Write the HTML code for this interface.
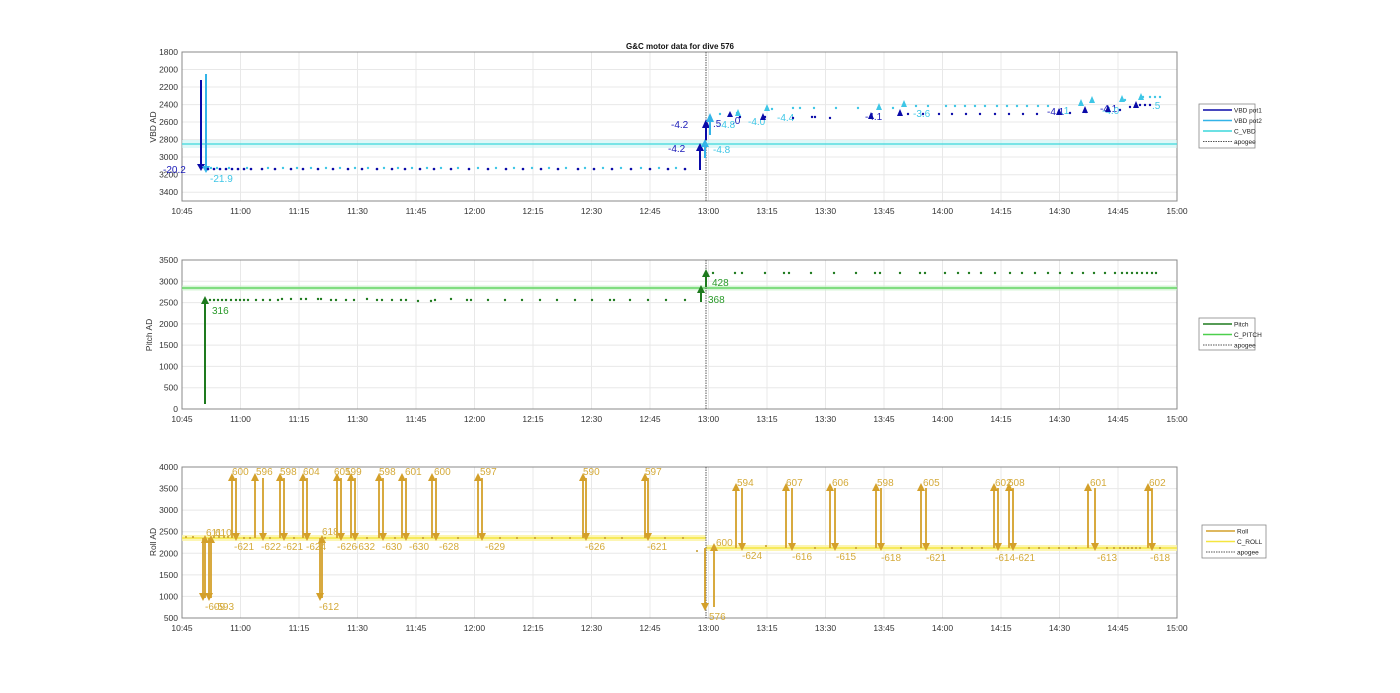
<!DOCTYPE html>
<html><head><meta charset="utf-8"><style>
html,body{margin:0;padding:0;background:#fff;}
svg{display:block;font-family:"Liberation Sans",sans-serif;}
.tk{font-size:8.5px;fill:#333;}
.g{stroke:#e8e8e8;stroke-width:1;}
.ax{fill:none;stroke:#888;stroke-width:1;}
</style></head><body>
<svg width="1400" height="693" viewBox="0 0 1400 693" xmlns="http://www.w3.org/2000/svg">
<rect width="1400" height="693" fill="#fff"/>
<!-- ============ PANEL 1 ============ -->
<g class="g">
<line x1="240.5" y1="52" x2="240.5" y2="201"/><line x1="299" y1="52" x2="299" y2="201"/><line x1="357.5" y1="52" x2="357.5" y2="201"/><line x1="416" y1="52" x2="416" y2="201"/><line x1="474.5" y1="52" x2="474.5" y2="201"/><line x1="533" y1="52" x2="533" y2="201"/><line x1="591.5" y1="52" x2="591.5" y2="201"/><line x1="650" y1="52" x2="650" y2="201"/><line x1="708.5" y1="52" x2="708.5" y2="201"/><line x1="767" y1="52" x2="767" y2="201"/><line x1="825.5" y1="52" x2="825.5" y2="201"/><line x1="884" y1="52" x2="884" y2="201"/><line x1="942.5" y1="52" x2="942.5" y2="201"/><line x1="1001" y1="52" x2="1001" y2="201"/><line x1="1059.5" y1="52" x2="1059.5" y2="201"/><line x1="1118" y1="52" x2="1118" y2="201"/>
<line x1="182" y1="69.5" x2="1177" y2="69.5"/><line x1="182" y1="87" x2="1177" y2="87"/><line x1="182" y1="104.6" x2="1177" y2="104.6"/><line x1="182" y1="122" x2="1177" y2="122"/><line x1="182" y1="139.6" x2="1177" y2="139.6"/><line x1="182" y1="157" x2="1177" y2="157"/><line x1="182" y1="174.7" x2="1177" y2="174.7"/><line x1="182" y1="192.2" x2="1177" y2="192.2"/>
</g>
<rect class="ax" x="182" y="52" width="995" height="149"/>
<text x="680" y="49" font-size="8px" font-weight="bold" text-anchor="middle" fill="#111">G&amp;C motor data for dive 576</text>
<g class="tk" text-anchor="end">
<text x="178" y="55">1800</text><text x="178" y="72.5">2000</text><text x="178" y="90">2200</text><text x="178" y="107.6">2400</text><text x="178" y="125">2600</text><text x="178" y="142.6">2800</text><text x="178" y="160">3000</text><text x="178" y="177.7">3200</text><text x="178" y="195.2">3400</text>
</g>
<g class="tk" text-anchor="middle">
<text x="182" y="214">10:45</text><text x="240.5" y="214">11:00</text><text x="299" y="214">11:15</text><text x="357.5" y="214">11:30</text><text x="416" y="214">11:45</text><text x="474.5" y="214">12:00</text><text x="533" y="214">12:15</text><text x="591.5" y="214">12:30</text><text x="650" y="214">12:45</text><text x="708.5" y="214">13:00</text><text x="767" y="214">13:15</text><text x="825.5" y="214">13:30</text><text x="884" y="214">13:45</text><text x="942.5" y="214">14:00</text><text x="1001" y="214">14:15</text><text x="1059.5" y="214">14:30</text><text x="1118" y="214">14:45</text><text x="1177" y="214">15:00</text>
</g>
<text transform="translate(156,127) rotate(-90)" font-size="8.5px" fill="#333" text-anchor="middle">VBD AD</text>
<rect x="182" y="140" width="995" height="8" fill="#c8f4f4" opacity="0.6"/>
<line x1="182" y1="144" x2="1177" y2="144" stroke="#3cd7dc" stroke-width="1.3"/>
<line x1="706" y1="52" x2="706" y2="201" stroke="#555" stroke-dasharray="1.5,1" stroke-width="1"/>
<!-- arrows -->
<g stroke-width="2">
<line x1="201" y1="80" x2="201" y2="164" stroke="#0a0aa8"/><polygon points="197,164 205,164 201,171" fill="#0a0aa8"/>
<line x1="206" y1="74" x2="206" y2="166" stroke="#33b4e8"/><polygon points="202,166 210,166 206,173" fill="#33b4e8"/>
<line x1="700" y1="170" x2="700" y2="150" stroke="#0a0aa8"/><polygon points="696,151 704,151 700,143" fill="#0a0aa8"/>
<line x1="705" y1="158" x2="705" y2="146" stroke="#33b4e8"/><polygon points="701,147 709,147 705,139" fill="#33b4e8"/>
<line x1="706" y1="140" x2="706" y2="127" stroke="#0a0aa8"/><polygon points="702,128 710,128 706,119" fill="#0a0aa8"/>
<line x1="710" y1="135" x2="710" y2="121" stroke="#33b4e8"/><polygon points="706,122 714,122 710,113" fill="#33b4e8"/>
</g>
<g font-size="10px" fill="#1a1ab8">
<text x="163" y="173">-20.2</text><text x="668" y="152">-4.2</text><text x="671" y="128">-4.2</text><text x="713" y="127">.5</text><text x="732" y="124">.0</text><text x="865" y="120">-4.1</text><text x="1047" y="115">-4.1</text><text x="1100" y="112">-4.1</text>
</g>
<g font-size="10px" fill="#3ec6e6">
<text x="210" y="182">-21.9</text><text x="713" y="153">-4.8</text><text x="718" y="128">-4.8</text><text x="748" y="125">-4.0</text><text x="777" y="121">-4.4</text><text x="913" y="117">-3.6</text><text x="1061" y="114">.1</text><text x="1102" y="114">-4.0</text><text x="1152" y="109">.5</text>
</g>
<g fill="#0a0aa8">
<circle cx="208" cy="169" r="1.3"/><circle cx="214" cy="169" r="1.3"/><circle cx="220" cy="169" r="1.3"/><circle cx="226" cy="169" r="1.3"/><circle cx="232" cy="169" r="1.3"/><circle cx="238" cy="169" r="1.3"/><circle cx="244" cy="169" r="1.3"/><circle cx="251" cy="169" r="1.3"/><circle cx="262" cy="169" r="1.3"/><circle cx="275" cy="169" r="1.3"/><circle cx="291" cy="169" r="1.3"/><circle cx="303" cy="169" r="1.3"/><circle cx="318" cy="169" r="1.3"/><circle cx="333" cy="169" r="1.3"/><circle cx="348" cy="169" r="1.3"/><circle cx="362" cy="169" r="1.3"/><circle cx="377" cy="169" r="1.3"/><circle cx="392" cy="169" r="1.3"/><circle cx="405" cy="169" r="1.3"/><circle cx="420" cy="169" r="1.3"/><circle cx="434" cy="169" r="1.3"/><circle cx="451" cy="169" r="1.3"/><circle cx="469" cy="169" r="1.3"/><circle cx="488" cy="169" r="1.3"/><circle cx="506" cy="169" r="1.3"/><circle cx="523" cy="169" r="1.3"/><circle cx="541" cy="169" r="1.3"/><circle cx="558" cy="169" r="1.3"/><circle cx="578" cy="169" r="1.3"/><circle cx="594" cy="169" r="1.3"/><circle cx="612" cy="169" r="1.3"/><circle cx="631" cy="169" r="1.3"/><circle cx="650" cy="169" r="1.3"/><circle cx="668" cy="169" r="1.3"/><circle cx="685" cy="169" r="1.3"/>
<circle cx="740" cy="117" r="1.2"/><circle cx="765" cy="117" r="1.2"/><circle cx="793" cy="118" r="1.2"/><circle cx="812" cy="117" r="1.2"/><circle cx="815" cy="117" r="1.2"/><circle cx="830" cy="118" r="1.2"/><circle cx="908" cy="114" r="1.2"/><circle cx="923" cy="114" r="1.2"/><circle cx="939" cy="114" r="1.2"/><circle cx="952" cy="114" r="1.2"/><circle cx="966" cy="114" r="1.2"/><circle cx="980" cy="114" r="1.2"/><circle cx="995" cy="114" r="1.2"/><circle cx="1009" cy="114" r="1.2"/><circle cx="1023" cy="114" r="1.2"/><circle cx="1037" cy="114" r="1.2"/><circle cx="1070" cy="113" r="1.2"/><circle cx="1086" cy="112" r="1.2"/><circle cx="1120" cy="110" r="1.2"/><circle cx="1130" cy="107" r="1.2"/><circle cx="1140" cy="105" r="1.2"/><circle cx="1145" cy="105" r="1.2"/><circle cx="1150" cy="105" r="1.2"/>
<polygon points="727,117 733,117 730,111"/><polygon points="760,120 766,120 763,113"/><polygon points="868,119 874,119 871,112"/><polygon points="897,116 903,116 900,109"/><polygon points="1056,115 1062,115 1059,108"/><polygon points="1082,113 1088,113 1085,106"/><polygon points="1105,112 1111,112 1108,105"/><polygon points="1133,108 1139,108 1136,101"/>
</g>
<g fill="#3ec6e6">
<circle cx="211" cy="168" r="1.2"/><circle cx="217" cy="168" r="1.2"/><circle cx="229" cy="168" r="1.2"/><circle cx="247" cy="168" r="1.2"/><circle cx="268" cy="168" r="1.2"/><circle cx="283" cy="168" r="1.2"/><circle cx="297" cy="168" r="1.2"/><circle cx="311" cy="168" r="1.2"/><circle cx="326" cy="168" r="1.2"/><circle cx="340" cy="168" r="1.2"/><circle cx="355" cy="168" r="1.2"/><circle cx="368" cy="168" r="1.2"/><circle cx="384" cy="168" r="1.2"/><circle cx="398" cy="168" r="1.2"/><circle cx="412" cy="168" r="1.2"/><circle cx="427" cy="168" r="1.2"/><circle cx="441" cy="168" r="1.2"/><circle cx="458" cy="168" r="1.2"/><circle cx="478" cy="168" r="1.2"/><circle cx="496" cy="168" r="1.2"/><circle cx="514" cy="168" r="1.2"/><circle cx="532" cy="168" r="1.2"/><circle cx="549" cy="168" r="1.2"/><circle cx="566" cy="168" r="1.2"/><circle cx="585" cy="168" r="1.2"/><circle cx="603" cy="168" r="1.2"/><circle cx="621" cy="168" r="1.2"/><circle cx="641" cy="168" r="1.2"/><circle cx="659" cy="168" r="1.2"/><circle cx="676" cy="168" r="1.2"/>
<circle cx="720" cy="114" r="1.2"/><circle cx="737" cy="113" r="1.2"/><circle cx="772" cy="109" r="1.2"/><circle cx="793" cy="108" r="1.2"/><circle cx="800" cy="108" r="1.2"/><circle cx="814" cy="108" r="1.2"/><circle cx="836" cy="108" r="1.2"/><circle cx="858" cy="108" r="1.2"/><circle cx="893" cy="108" r="1.2"/><circle cx="916" cy="106" r="1.2"/><circle cx="928" cy="106" r="1.2"/><circle cx="946" cy="106" r="1.2"/><circle cx="955" cy="106" r="1.2"/><circle cx="965" cy="106" r="1.2"/><circle cx="975" cy="106" r="1.2"/><circle cx="985" cy="106" r="1.2"/><circle cx="997" cy="106" r="1.2"/><circle cx="1007" cy="106" r="1.2"/><circle cx="1017" cy="106" r="1.2"/><circle cx="1027" cy="106" r="1.2"/><circle cx="1038" cy="106" r="1.2"/><circle cx="1048" cy="106" r="1.2"/><circle cx="1125" cy="100" r="1.2"/><circle cx="1143" cy="97" r="1.2"/><circle cx="1150" cy="97" r="1.2"/><circle cx="1155" cy="97" r="1.2"/><circle cx="1160" cy="97" r="1.2"/>
<polygon points="735,116 741,116 738,109"/><polygon points="764,111 770,111 767,104"/><polygon points="876,110 882,110 879,103"/><polygon points="901,107 907,107 904,100"/><polygon points="1078,106 1084,106 1081,99"/><polygon points="1089,103 1095,103 1092,96"/><polygon points="1119,102 1125,102 1122,95"/><polygon points="1138,100 1144,100 1141,93"/>
</g>
<!-- legend 1 -->
<rect x="1199" y="104" width="56" height="44" fill="#fff" stroke="#888" stroke-width="0.8"/>
<line x1="1203" y1="110" x2="1232" y2="110" stroke="#0a0aa8" stroke-width="1.5"/><line x1="1203" y1="120.5" x2="1232" y2="120.5" stroke="#33b4e8" stroke-width="1.5"/><line x1="1203" y1="131" x2="1232" y2="131" stroke="#3cd7dc" stroke-width="1.5"/><line x1="1203" y1="141.5" x2="1232" y2="141.5" stroke="#555" stroke-dasharray="1.5,1"/>
<g font-size="6.5px" fill="#222"><text x="1234" y="112.5">VBD pot1</text><text x="1234" y="123">VBD pot2</text><text x="1234" y="133.5">C_VBD</text><text x="1234" y="144">apogee</text></g>
<!-- ============ PANEL 2 ============ -->
<g class="g">
<line x1="240.5" y1="260" x2="240.5" y2="409"/><line x1="299" y1="260" x2="299" y2="409"/><line x1="357.5" y1="260" x2="357.5" y2="409"/><line x1="416" y1="260" x2="416" y2="409"/><line x1="474.5" y1="260" x2="474.5" y2="409"/><line x1="533" y1="260" x2="533" y2="409"/><line x1="591.5" y1="260" x2="591.5" y2="409"/><line x1="650" y1="260" x2="650" y2="409"/><line x1="708.5" y1="260" x2="708.5" y2="409"/><line x1="767" y1="260" x2="767" y2="409"/><line x1="825.5" y1="260" x2="825.5" y2="409"/><line x1="884" y1="260" x2="884" y2="409"/><line x1="942.5" y1="260" x2="942.5" y2="409"/><line x1="1001" y1="260" x2="1001" y2="409"/><line x1="1059.5" y1="260" x2="1059.5" y2="409"/><line x1="1118" y1="260" x2="1118" y2="409"/>
<line x1="182" y1="281.3" x2="1177" y2="281.3"/><line x1="182" y1="302.6" x2="1177" y2="302.6"/><line x1="182" y1="323.9" x2="1177" y2="323.9"/><line x1="182" y1="345.1" x2="1177" y2="345.1"/><line x1="182" y1="366.4" x2="1177" y2="366.4"/><line x1="182" y1="387.7" x2="1177" y2="387.7"/>
</g>
<rect class="ax" x="182" y="260" width="995" height="149"/>
<g class="tk" text-anchor="end">
<text x="178" y="263">3500</text><text x="178" y="284.3">3000</text><text x="178" y="305.6">2500</text><text x="178" y="326.9">2000</text><text x="178" y="348.1">1500</text><text x="178" y="369.4">1000</text><text x="178" y="390.7">500</text><text x="178" y="412">0</text>
</g>
<g class="tk" text-anchor="middle">
<text x="182" y="422">10:45</text><text x="240.5" y="422">11:00</text><text x="299" y="422">11:15</text><text x="357.5" y="422">11:30</text><text x="416" y="422">11:45</text><text x="474.5" y="422">12:00</text><text x="533" y="422">12:15</text><text x="591.5" y="422">12:30</text><text x="650" y="422">12:45</text><text x="708.5" y="422">13:00</text><text x="767" y="422">13:15</text><text x="825.5" y="422">13:30</text><text x="884" y="422">13:45</text><text x="942.5" y="422">14:00</text><text x="1001" y="422">14:15</text><text x="1059.5" y="422">14:30</text><text x="1118" y="422">14:45</text><text x="1177" y="422">15:00</text>
</g>
<text transform="translate(152,335) rotate(-90)" font-size="8.5px" fill="#333" text-anchor="middle">Pitch AD</text>
<rect x="182" y="285.5" width="995" height="5" fill="#c6f0c6" opacity="0.7"/>
<line x1="182" y1="288" x2="1177" y2="288" stroke="#4ccf4c" stroke-width="1.3"/>
<line x1="706" y1="260" x2="706" y2="409" stroke="#555" stroke-dasharray="1.5,1"/>
<g stroke="#1e7a1e" stroke-width="2">
<line x1="205" y1="404" x2="205" y2="303"/><line x1="701" y1="302" x2="701" y2="292"/><line x1="706" y1="287" x2="706" y2="276"/>
</g>
<g fill="#1e7a1e">
<polygon points="201,304 209,304 205,296"/><polygon points="697,293 705,293 701,285"/><polygon points="702,277 710,277 706,269"/>
</g>
<g font-size="10px" fill="#2a9a2a"><text x="212" y="314">316</text><text x="708" y="303">368</text><text x="712" y="286">428</text></g>
<g fill="#1e7a1e">
<circle cx="210" cy="300" r="1.2"/><circle cx="214" cy="300" r="1.2"/><circle cx="218" cy="300" r="1.2"/><circle cx="222" cy="300" r="1.2"/><circle cx="226" cy="300" r="1.2"/><circle cx="231" cy="300" r="1.2"/><circle cx="236" cy="300" r="1.2"/><circle cx="240" cy="300" r="1.2"/><circle cx="244" cy="300" r="1.2"/><circle cx="248" cy="300" r="1.2"/><circle cx="256" cy="300" r="1.2"/><circle cx="263" cy="300" r="1.2"/><circle cx="270" cy="300" r="1.2"/><circle cx="278" cy="300" r="1.2"/><circle cx="282" cy="299" r="1.2"/><circle cx="291" cy="299" r="1.2"/><circle cx="301" cy="299" r="1.2"/><circle cx="306" cy="299" r="1.2"/><circle cx="318" cy="299" r="1.2"/><circle cx="321" cy="299" r="1.2"/><circle cx="331" cy="300" r="1.2"/><circle cx="336" cy="300" r="1.2"/><circle cx="346" cy="300" r="1.2"/><circle cx="354" cy="300" r="1.2"/><circle cx="367" cy="299" r="1.2"/><circle cx="377" cy="300" r="1.2"/><circle cx="382" cy="300" r="1.2"/><circle cx="392" cy="300" r="1.2"/><circle cx="401" cy="300" r="1.2"/><circle cx="406" cy="300" r="1.2"/><circle cx="418" cy="301" r="1.2"/><circle cx="431" cy="301" r="1.2"/><circle cx="435" cy="300" r="1.2"/><circle cx="451" cy="299" r="1.2"/><circle cx="467" cy="300" r="1.2"/><circle cx="471" cy="300" r="1.2"/><circle cx="488" cy="300" r="1.2"/><circle cx="505" cy="300" r="1.2"/><circle cx="522" cy="300" r="1.2"/><circle cx="540" cy="300" r="1.2"/><circle cx="557" cy="300" r="1.2"/><circle cx="575" cy="300" r="1.2"/><circle cx="592" cy="300" r="1.2"/><circle cx="610" cy="300" r="1.2"/><circle cx="614" cy="300" r="1.2"/><circle cx="630" cy="300" r="1.2"/><circle cx="648" cy="300" r="1.2"/><circle cx="666" cy="300" r="1.2"/><circle cx="685" cy="300" r="1.2"/>
<circle cx="713" cy="273" r="1.2"/><circle cx="735" cy="273" r="1.2"/><circle cx="742" cy="273" r="1.2"/><circle cx="765" cy="273" r="1.2"/><circle cx="784" cy="273" r="1.2"/><circle cx="789" cy="273" r="1.2"/><circle cx="811" cy="273" r="1.2"/><circle cx="834" cy="273" r="1.2"/><circle cx="856" cy="273" r="1.2"/><circle cx="875" cy="273" r="1.2"/><circle cx="880" cy="273" r="1.2"/><circle cx="900" cy="273" r="1.2"/><circle cx="920" cy="273" r="1.2"/><circle cx="925" cy="273" r="1.2"/><circle cx="945" cy="273" r="1.2"/><circle cx="958" cy="273" r="1.2"/><circle cx="969" cy="273" r="1.2"/><circle cx="981" cy="273" r="1.2"/><circle cx="995" cy="273" r="1.2"/><circle cx="1010" cy="273" r="1.2"/><circle cx="1022" cy="273" r="1.2"/><circle cx="1035" cy="273" r="1.2"/><circle cx="1048" cy="273" r="1.2"/><circle cx="1060" cy="273" r="1.2"/><circle cx="1072" cy="273" r="1.2"/><circle cx="1083" cy="273" r="1.2"/><circle cx="1094" cy="273" r="1.2"/><circle cx="1105" cy="273" r="1.2"/><circle cx="1115" cy="273" r="1.2"/><circle cx="1122" cy="273" r="1.2"/><circle cx="1127" cy="273" r="1.2"/><circle cx="1132" cy="273" r="1.2"/><circle cx="1137" cy="273" r="1.2"/><circle cx="1142" cy="273" r="1.2"/><circle cx="1147" cy="273" r="1.2"/><circle cx="1152" cy="273" r="1.2"/><circle cx="1156" cy="273" r="1.2"/>
</g>
<rect x="1199" y="318" width="56" height="32" fill="#fff" stroke="#888" stroke-width="0.8"/>
<line x1="1203" y1="324" x2="1232" y2="324" stroke="#1e7a1e" stroke-width="1.5"/><line x1="1203" y1="334.5" x2="1232" y2="334.5" stroke="#4ccf4c" stroke-width="1.5"/><line x1="1203" y1="345" x2="1232" y2="345" stroke="#555" stroke-dasharray="1.5,1"/>
<g font-size="6.5px" fill="#222"><text x="1234" y="326.5">Pitch</text><text x="1234" y="337">C_PITCH</text><text x="1234" y="347.5">apogee</text></g>
<!-- ============ PANEL 3 ============ -->
<g class="g">
<line x1="240.5" y1="467" x2="240.5" y2="618"/><line x1="299" y1="467" x2="299" y2="618"/><line x1="357.5" y1="467" x2="357.5" y2="618"/><line x1="416" y1="467" x2="416" y2="618"/><line x1="474.5" y1="467" x2="474.5" y2="618"/><line x1="533" y1="467" x2="533" y2="618"/><line x1="591.5" y1="467" x2="591.5" y2="618"/><line x1="650" y1="467" x2="650" y2="618"/><line x1="708.5" y1="467" x2="708.5" y2="618"/><line x1="767" y1="467" x2="767" y2="618"/><line x1="825.5" y1="467" x2="825.5" y2="618"/><line x1="884" y1="467" x2="884" y2="618"/><line x1="942.5" y1="467" x2="942.5" y2="618"/><line x1="1001" y1="467" x2="1001" y2="618"/><line x1="1059.5" y1="467" x2="1059.5" y2="618"/><line x1="1118" y1="467" x2="1118" y2="618"/>
<line x1="182" y1="488.6" x2="1177" y2="488.6"/><line x1="182" y1="510.1" x2="1177" y2="510.1"/><line x1="182" y1="531.7" x2="1177" y2="531.7"/><line x1="182" y1="553.3" x2="1177" y2="553.3"/><line x1="182" y1="574.9" x2="1177" y2="574.9"/><line x1="182" y1="596.4" x2="1177" y2="596.4"/>
</g>
<rect class="ax" x="182" y="467" width="995" height="151"/>
<g class="tk" text-anchor="end">
<text x="178" y="470">4000</text><text x="178" y="491.6">3500</text><text x="178" y="513.1">3000</text><text x="178" y="534.7">2500</text><text x="178" y="556.3">2000</text><text x="178" y="577.9">1500</text><text x="178" y="599.4">1000</text><text x="178" y="621">500</text>
</g>
<g class="tk" text-anchor="middle">
<text x="182" y="631">10:45</text><text x="240.5" y="631">11:00</text><text x="299" y="631">11:15</text><text x="357.5" y="631">11:30</text><text x="416" y="631">11:45</text><text x="474.5" y="631">12:00</text><text x="533" y="631">12:15</text><text x="591.5" y="631">12:30</text><text x="650" y="631">12:45</text><text x="708.5" y="631">13:00</text><text x="767" y="631">13:15</text><text x="825.5" y="631">13:30</text><text x="884" y="631">13:45</text><text x="942.5" y="631">14:00</text><text x="1001" y="631">14:15</text><text x="1059.5" y="631">14:30</text><text x="1118" y="631">14:45</text><text x="1177" y="631">15:00</text>
</g>
<text transform="translate(156,542) rotate(-90)" font-size="8.5px" fill="#333" text-anchor="middle">Roll AD</text>
<rect x="182" y="535" width="524" height="6" fill="#fbf3a0" opacity="0.8"/>
<line x1="182" y1="538" x2="706" y2="538" stroke="#f5e640" stroke-width="1.5"/>
<rect x="706" y="545" width="471" height="6" fill="#fbf3a0" opacity="0.8"/>
<line x1="706" y1="548" x2="1177" y2="548" stroke="#f5e640" stroke-width="1.5"/>
<line x1="706" y1="467" x2="706" y2="618" stroke="#555" stroke-dasharray="1.5,1"/>
<g fill="#c49a2a">
<circle cx="186" cy="537" r="1"/><circle cx="193" cy="537" r="1"/><circle cx="214" cy="537" r="1"/><circle cx="219" cy="537" r="1"/><circle cx="224" cy="537" r="1"/><circle cx="228" cy="537" r="1"/><circle cx="244" cy="538" r="1"/><circle cx="250" cy="538" r="1"/><circle cx="270" cy="538" r="1"/><circle cx="294" cy="538" r="1"/><circle cx="325" cy="538" r="1"/><circle cx="367" cy="538" r="1"/><circle cx="395" cy="538" r="1"/><circle cx="423" cy="538" r="1"/><circle cx="458" cy="538" r="1"/><circle cx="500" cy="538" r="1"/><circle cx="517" cy="538" r="1"/><circle cx="535" cy="538" r="1"/><circle cx="552" cy="538" r="1"/><circle cx="570" cy="538" r="1"/><circle cx="605" cy="538" r="1"/><circle cx="622" cy="538" r="1"/><circle cx="665" cy="538" r="1"/><circle cx="683" cy="538" r="1"/><circle cx="697" cy="551" r="1"/>
<circle cx="766" cy="546" r="1"/><circle cx="815" cy="548" r="1"/><circle cx="856" cy="548" r="1"/><circle cx="901" cy="548" r="1"/><circle cx="942" cy="548" r="1"/><circle cx="952" cy="548" r="1"/><circle cx="962" cy="548" r="1"/><circle cx="972" cy="548" r="1"/><circle cx="982" cy="548" r="1"/><circle cx="1029" cy="548" r="1"/><circle cx="1039" cy="548" r="1"/><circle cx="1049" cy="548" r="1"/><circle cx="1059" cy="548" r="1"/><circle cx="1069" cy="548" r="1"/><circle cx="1076" cy="548" r="1"/><circle cx="1107" cy="548" r="1"/><circle cx="1114" cy="548" r="1"/><circle cx="1120" cy="548" r="1"/><circle cx="1124" cy="548" r="1"/><circle cx="1128" cy="548" r="1"/><circle cx="1132" cy="548" r="1"/><circle cx="1136" cy="548" r="1"/><circle cx="1140" cy="548" r="1"/><circle cx="1160" cy="548" r="1"/>
</g>
<!-- up arrows: line from base to top+7, head -->
<g stroke="#d4a02a" stroke-width="1.8">
<line x1="232" y1="538" x2="232" y2="480"/><line x1="255" y1="538" x2="255" y2="480"/><line x1="280" y1="538" x2="280" y2="480"/><line x1="303" y1="538" x2="303" y2="480"/><line x1="337" y1="538" x2="337" y2="480"/><line x1="351" y1="538" x2="351" y2="480"/><line x1="379" y1="538" x2="379" y2="480"/><line x1="402" y1="538" x2="402" y2="480"/><line x1="432" y1="538" x2="432" y2="480"/><line x1="478" y1="538" x2="478" y2="480"/><line x1="583" y1="538" x2="583" y2="480"/><line x1="645" y1="538" x2="645" y2="480"/>
<line x1="205" y1="598" x2="205" y2="542"/><line x1="211" y1="598" x2="211" y2="542"/><line x1="322" y1="598" x2="322" y2="542"/><line x1="714" y1="607" x2="714" y2="550"/>
<line x1="736" y1="548" x2="736" y2="490"/><line x1="786" y1="548" x2="786" y2="490"/><line x1="830" y1="548" x2="830" y2="490"/><line x1="876" y1="548" x2="876" y2="490"/><line x1="921" y1="548" x2="921" y2="490"/><line x1="994" y1="548" x2="994" y2="490"/><line x1="1009" y1="548" x2="1009" y2="490"/><line x1="1088" y1="548" x2="1088" y2="490"/><line x1="1148" y1="548" x2="1148" y2="490"/>
<!-- down arrows -->
<line x1="236" y1="478" x2="236" y2="534"/><line x1="263" y1="478" x2="263" y2="534"/><line x1="284" y1="478" x2="284" y2="534"/><line x1="307" y1="478" x2="307" y2="534"/><line x1="341" y1="478" x2="341" y2="534"/><line x1="355" y1="478" x2="355" y2="534"/><line x1="383" y1="478" x2="383" y2="534"/><line x1="406" y1="478" x2="406" y2="534"/><line x1="436" y1="478" x2="436" y2="534"/><line x1="482" y1="478" x2="482" y2="534"/><line x1="586" y1="478" x2="586" y2="534"/><line x1="648" y1="478" x2="648" y2="534"/>
<line x1="203" y1="538" x2="203" y2="594"/><line x1="209" y1="538" x2="209" y2="594"/><line x1="320" y1="538" x2="320" y2="594"/><line x1="705" y1="548" x2="705" y2="604"/>
<line x1="742" y1="488" x2="742" y2="544"/><line x1="792" y1="488" x2="792" y2="544"/><line x1="835" y1="488" x2="835" y2="544"/><line x1="881" y1="488" x2="881" y2="544"/><line x1="926" y1="488" x2="926" y2="544"/><line x1="998" y1="488" x2="998" y2="544"/><line x1="1013" y1="488" x2="1013" y2="544"/><line x1="1095" y1="488" x2="1095" y2="544"/><line x1="1152" y1="488" x2="1152" y2="544"/>
</g>
<g fill="#d4a02a">
<polygon points="228,481 236,481 232,473"/><polygon points="251,481 259,481 255,473"/><polygon points="276,481 284,481 280,473"/><polygon points="299,481 307,481 303,473"/><polygon points="333,481 341,481 337,473"/><polygon points="347,481 355,481 351,473"/><polygon points="375,481 383,481 379,473"/><polygon points="398,481 406,481 402,473"/><polygon points="428,481 436,481 432,473"/><polygon points="474,481 482,481 478,473"/><polygon points="579,481 587,481 583,473"/><polygon points="641,481 649,481 645,473"/>
<polygon points="201,543 209,543 205,535"/><polygon points="207,543 215,543 211,535"/><polygon points="318,543 326,543 322,535"/><polygon points="710,551 718,551 714,543"/>
<polygon points="732,491 740,491 736,483"/><polygon points="782,491 790,491 786,483"/><polygon points="826,491 834,491 830,483"/><polygon points="872,491 880,491 876,483"/><polygon points="917,491 925,491 921,483"/><polygon points="990,491 998,491 994,483"/><polygon points="1005,491 1013,491 1009,483"/><polygon points="1084,491 1092,491 1088,483"/><polygon points="1144,491 1152,491 1148,483"/>
<polygon points="232,533 240,533 236,541"/><polygon points="259,533 267,533 263,541"/><polygon points="280,533 288,533 284,541"/><polygon points="303,533 311,533 307,541"/><polygon points="337,533 345,533 341,541"/><polygon points="351,533 359,533 355,541"/><polygon points="379,533 387,533 383,541"/><polygon points="402,533 410,533 406,541"/><polygon points="432,533 440,533 436,541"/><polygon points="478,533 486,533 482,541"/><polygon points="582,533 590,533 586,541"/><polygon points="644,533 652,533 648,541"/>
<polygon points="199,593 207,593 203,601"/><polygon points="205,593 213,593 209,601"/><polygon points="316,593 324,593 320,601"/><polygon points="701,603 709,603 705,611"/>
<polygon points="738,543 746,543 742,551"/><polygon points="788,543 796,543 792,551"/><polygon points="831,543 839,543 835,551"/><polygon points="877,543 885,543 881,551"/><polygon points="922,543 930,543 926,551"/><polygon points="994,543 1002,543 998,551"/><polygon points="1009,543 1017,543 1013,551"/><polygon points="1091,543 1099,543 1095,551"/><polygon points="1148,543 1156,543 1152,551"/>
</g>
<g font-size="10px" fill="#d4aa3a">
<text x="232" y="475">600</text><text x="256" y="475">596</text><text x="280" y="475">598</text><text x="303" y="475">604</text><text x="334" y="475">601</text><text x="345" y="475">599</text><text x="379" y="475">598</text><text x="405" y="475">601</text><text x="434" y="475">600</text><text x="480" y="475">597</text><text x="583" y="475">590</text><text x="645" y="475">597</text>
<text x="206" y="536">611</text><text x="215" y="536">610</text><text x="322" y="535">618</text><text x="716" y="546">600</text>
<text x="737" y="486">594</text><text x="786" y="486">607</text><text x="832" y="486">606</text><text x="877" y="486">598</text><text x="923" y="486">605</text><text x="995" y="486">602</text><text x="1008" y="486">608</text><text x="1090" y="486">601</text><text x="1149" y="486">602</text>
<text x="234" y="550">-621</text><text x="261" y="550">-622</text><text x="283" y="550">-621</text><text x="306" y="550">-624</text><text x="337" y="550">-626</text><text x="355" y="550">-632</text><text x="382" y="550">-630</text><text x="409" y="550">-630</text><text x="439" y="550">-628</text><text x="485" y="550">-629</text><text x="585" y="550">-626</text><text x="647" y="550">-621</text>
<text x="205" y="610">-609</text><text x="214" y="610">-593</text><text x="319" y="610">-612</text><text x="709" y="620">576</text>
<text x="742" y="559">-624</text><text x="792" y="560">-616</text><text x="836" y="560">-615</text><text x="881" y="561">-618</text><text x="926" y="561">-621</text><text x="995" y="561">-614</text><text x="1015" y="561">-621</text><text x="1097" y="561">-613</text><text x="1150" y="561">-618</text>
</g>
<rect x="1202" y="525" width="64" height="33" fill="#fff" stroke="#888" stroke-width="0.8"/>
<line x1="1206" y1="531" x2="1235" y2="531" stroke="#d4a02a" stroke-width="1.5"/><line x1="1206" y1="541.5" x2="1235" y2="541.5" stroke="#f5e640" stroke-width="1.5"/><line x1="1206" y1="552" x2="1235" y2="552" stroke="#555" stroke-dasharray="1.5,1"/>
<g font-size="6.5px" fill="#222"><text x="1237" y="533.5">Roll</text><text x="1237" y="544">C_ROLL</text><text x="1237" y="554.5">apogee</text></g>
</svg>
</body></html>
